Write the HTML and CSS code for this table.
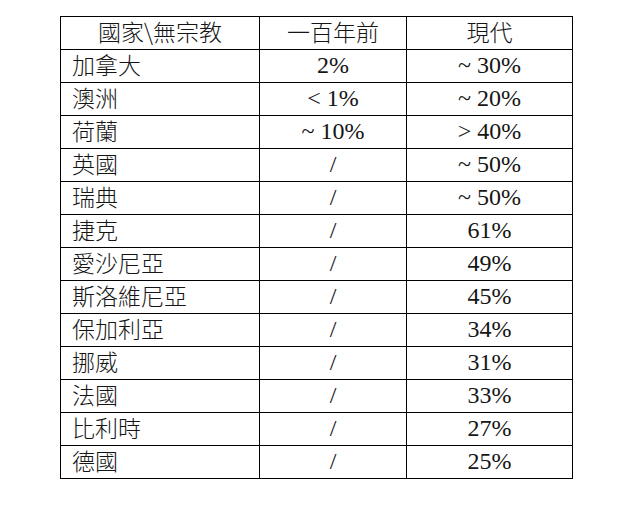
FILE: index.html
```html
<!DOCTYPE html>
<html lang="zh-Hant">
<head>
<meta charset="utf-8">
<link rel="stylesheet" href="styles.css">
</head>
<body>
<table class="data">
  <tr class="head"><th class="c1">國家\無宗教</th><th class="c2">一百年前</th><th class="c3">現代</th></tr>
  <tr><td class="name">加拿大</td><td class="num">2%</td><td class="num">~ 30%</td></tr>
  <tr><td class="name">澳洲</td><td class="num">&lt; 1%</td><td class="num">~ 20%</td></tr>
  <tr><td class="name">荷蘭</td><td class="num">~ 10%</td><td class="num">&gt; 40%</td></tr>
  <tr><td class="name">英國</td><td class="num">/</td><td class="num">~ 50%</td></tr>
  <tr><td class="name">瑞典</td><td class="num">/</td><td class="num">~ 50%</td></tr>
  <tr><td class="name">捷克</td><td class="num">/</td><td class="num">61%</td></tr>
  <tr><td class="name">愛沙尼亞</td><td class="num">/</td><td class="num">49%</td></tr>
  <tr><td class="name">斯洛維尼亞</td><td class="num">/</td><td class="num">45%</td></tr>
  <tr><td class="name">保加利亞</td><td class="num">/</td><td class="num">34%</td></tr>
  <tr><td class="name">挪威</td><td class="num">/</td><td class="num">31%</td></tr>
  <tr><td class="name">法國</td><td class="num">/</td><td class="num">33%</td></tr>
  <tr><td class="name">比利時</td><td class="num">/</td><td class="num">27%</td></tr>
  <tr><td class="name">德國</td><td class="num">/</td><td class="num">25%</td></tr>
</table>
</body>
</html>
```
FILE: styles.css
```css
html, body {
  margin: 0;
  padding: 0;
  background: #fff;
}
body {
  padding: 16px 0 0 60px;
}
.data {
  border-collapse: collapse;
  table-layout: fixed;
  width: 512px;
  color: #151515;
}
.data th, .data td {
  border: 1px solid #000;
  height: 33px;
  padding: 0 0 3px 0;
  box-sizing: border-box;
  vertical-align: middle;
  line-height: 1;
}
.data th {
  font-family: "Noto Sans CJK TC", "Noto Sans CJK SC", sans-serif;
  font-weight: 300;
  font-size: 23px;
  text-align: center;
}
.c1 { width: 199px; }
.c2 { width: 147px; }
.c3 { width: 166px; }
.data .name {
  font-family: "Noto Sans CJK TC", "Noto Sans CJK SC", sans-serif;
  font-weight: 300;
  font-size: 23px;
  text-align: left;
  padding-left: 11px;
}
.num {
  font-family: "Liberation Serif", "Times New Roman", serif;
  font-size: 24px;
  text-align: center;
}
```
